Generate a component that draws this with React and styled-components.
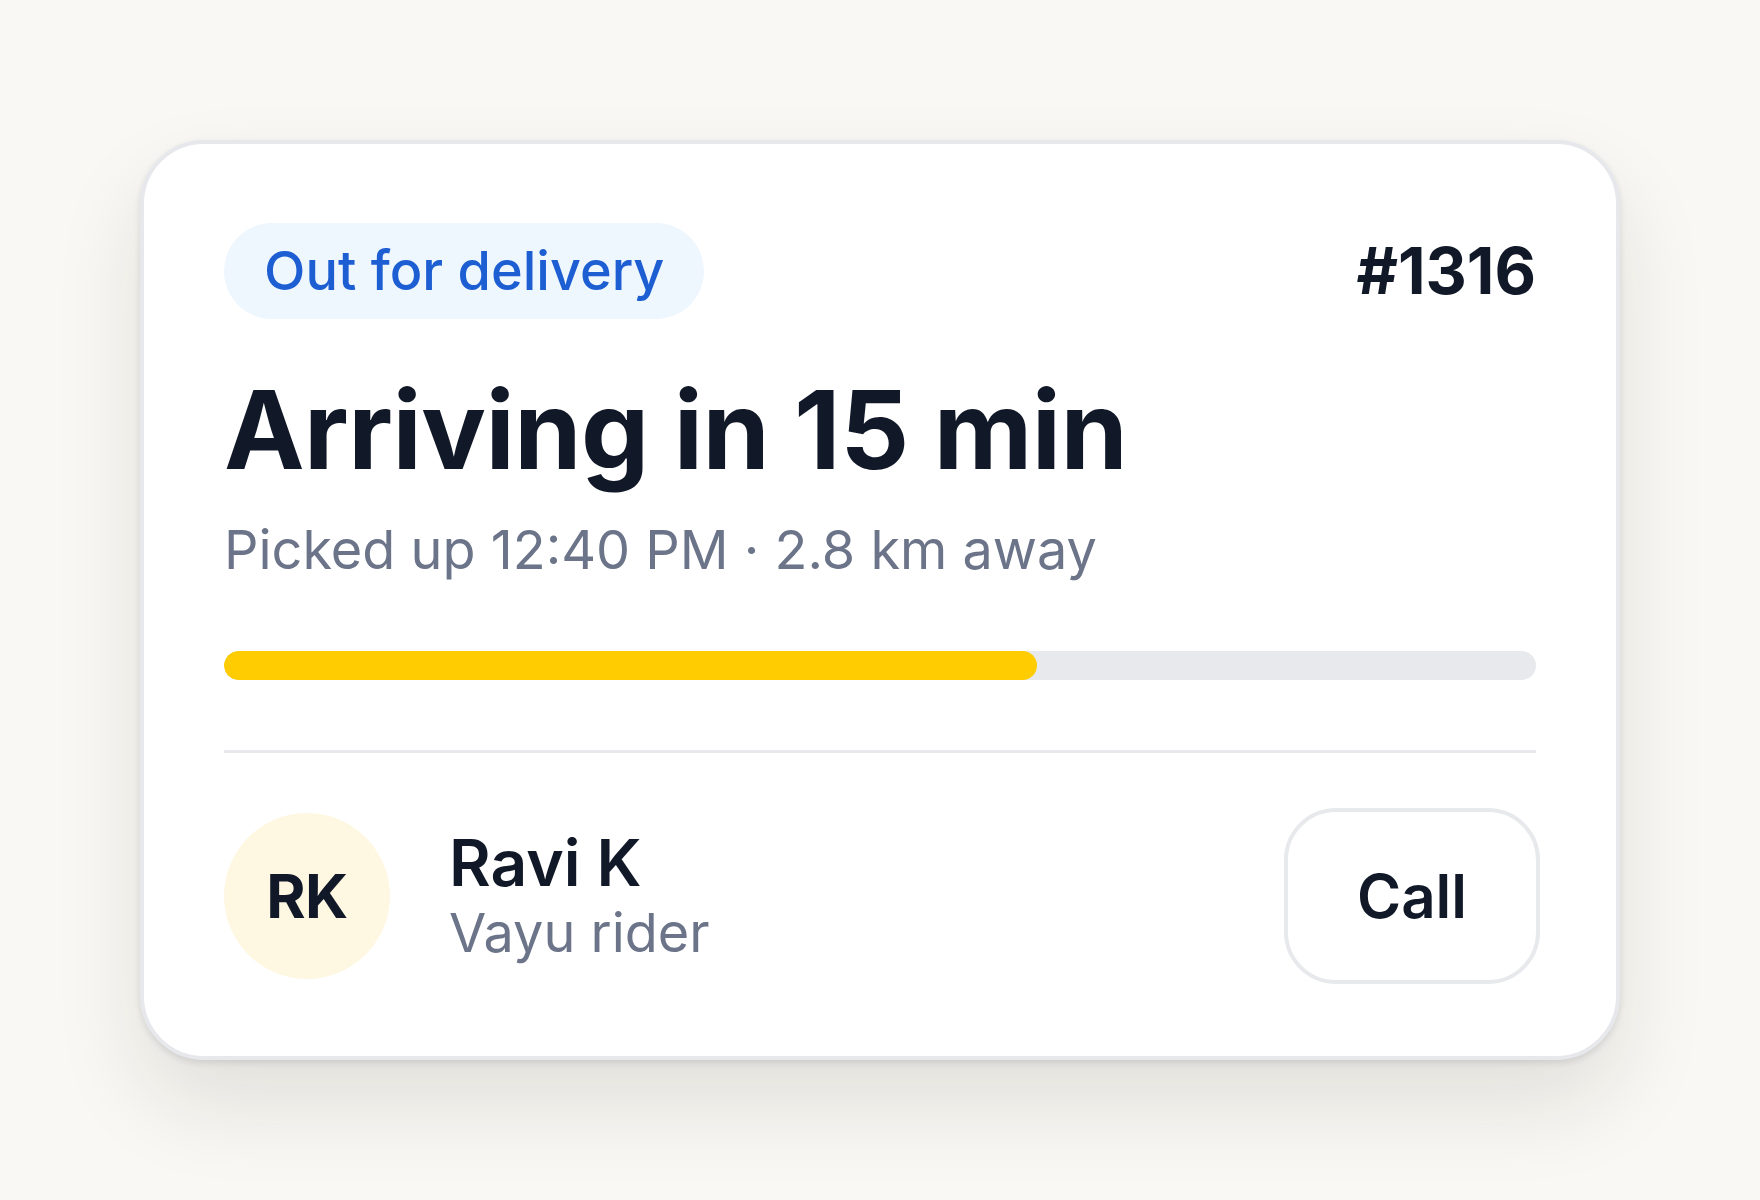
import React from "react";
import styled, { createGlobalStyle } from "styled-components";

const GlobalStyle = createGlobalStyle`
  html, body {
    margin: 0;
    padding: 0;
    background: #f9f8f4;
  }
  body {
    font-family: Inter, "Noto Sans", "Liberation Sans", sans-serif;
    color: #111827;
  }
`;

const Page = styled.div`
  min-height: 100vh;
  display: flex;
  align-items: center;
  justify-content: center;
`;

const Card = styled.div`
  box-sizing: border-box;
  width: 1480px;
  padding: 79px 80px 72px;
  background: #ffffff;
  border: 4px solid #e7e8eb;
  border-radius: 64px;
  box-shadow: 0 3px 6px rgba(40, 40, 60, 0.12), 0 44px 90px rgba(30, 30, 20, 0.11);
`;

const Header = styled.div`
  display: flex;
  align-items: center;
  justify-content: space-between;
`;

const Badge = styled.span`
  display: inline-flex;
  align-items: center;
  height: 96px;
  padding: 0 40px;
  border-radius: 999px;
  background: #eef6fe;
  color: #1d5fd3;
  font-size: 54px;
  font-weight: 500;
`;

const OrderId = styled.span`
  font-size: 64px;
  font-weight: 700;
`;

const Title = styled.h1`
  margin: 52px 0 0;
  font-size: 108px;
  line-height: 1.1;
  font-weight: 700;
  letter-spacing: -0.005em;
`;

const Meta = styled.p`
  margin: 22px 0 0;
  font-size: 54px;
  line-height: 1.4;
  color: #6b7488;
`;

const Track = styled.div`
  margin-top: 64px;
  height: 29px;
  border-radius: 999px;
  background: #e8e9ec;
  overflow: hidden;
`;

const Fill = styled.div`
  height: 100%;
  border-radius: 999px;
  background: #fecc00;
`;

const Divider = styled.hr`
  margin: 70px 0 55px;
  border: 0;
  height: 3px;
  background: #e8e9ec;
`;

const Rider = styled.div`
  display: flex;
  align-items: center;
`;

const Avatar = styled.div`
  width: 166px;
  height: 166px;
  flex: none;
  border-radius: 50%;
  background: #fef7e2;
  display: flex;
  align-items: center;
  justify-content: center;
  font-size: 60px;
  font-weight: 700;
  letter-spacing: -0.01em;
`;

const Info = styled.div`
  flex: 1;
  margin-left: 59px;
  display: flex;
  flex-direction: column;
`;

const Name = styled.span`
  margin-top: 2px;
  font-size: 64px;
  line-height: 1.1;
  font-weight: 600;
`;

const Role = styled.span`
  margin-top: 3px;
  font-size: 54px;
  line-height: 1.2;
  color: #6b7488;
`;

const CallButton = styled.button`
  box-sizing: border-box;
  width: 256px;
  height: 176px;
  margin-right: -4px;
  border: 4px solid #e8e9ec;
  border-radius: 52px;
  background: #ffffff;
  color: #111827;
  font-family: inherit;
  font-size: 60px;
  font-weight: 600;
  cursor: pointer;
`;

export default function App() {
  const progress = 62;
  return (
    <>
      <GlobalStyle />
      <Page>
        <Card>
          <Header>
            <Badge>Out for delivery</Badge>
            <OrderId>#1316</OrderId>
          </Header>
          <Title>Arriving in 15 min</Title>
          <Meta>Picked up 12:40 PM · 2.8 km away</Meta>
          <Track>
            <Fill style={{ width: `${progress}%` }} />
          </Track>
          <Divider />
          <Rider>
            <Avatar>RK</Avatar>
            <Info>
              <Name>Ravi K</Name>
              <Role>Vayu rider</Role>
            </Info>
            <CallButton>Call</CallButton>
          </Rider>
        </Card>
      </Page>
    </>
  );
}
